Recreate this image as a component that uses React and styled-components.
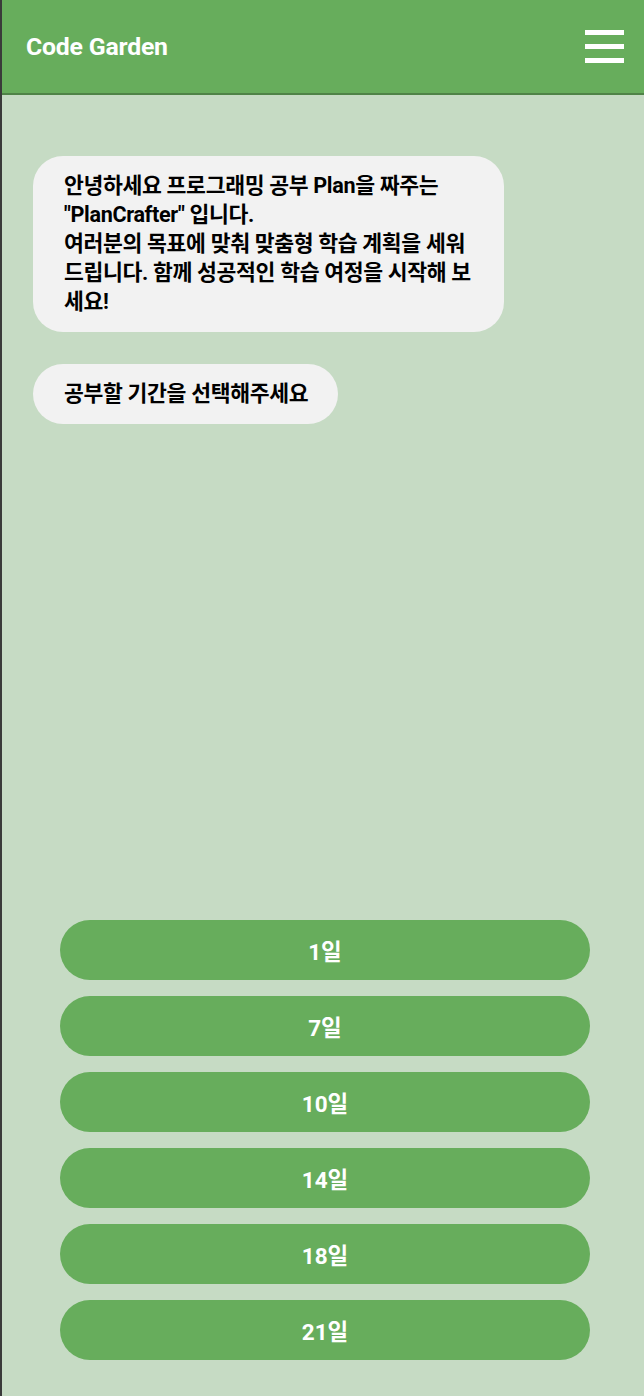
import React from "react";
import styled, { createGlobalStyle } from "styled-components";

const Global = createGlobalStyle`
  html, body { margin: 0; padding: 0; }
  body {
    font-family: Roboto, "Noto Sans CJK KR", sans-serif;
    background: #c6dbc4;
  }
  * { box-sizing: border-box; }
`;

const Page = styled.div`
  min-height: 100vh;
  display: flex;
  flex-direction: column;
  background: #c6dbc4;
  border-left: 2px solid #3a3a3a;
`;

const Header = styled.header`
  height: 95px;
  display: flex;
  align-items: center;
  justify-content: space-between;
  padding: 0 20px 0 24px;
  background: #67ad5c;
  border-bottom: 2px solid #4f8347;
`;

const Brand = styled.h1`
  margin: 0;
  font-size: 24.8px;
  font-weight: 700;
  color: #ffffff;
  letter-spacing: -0.2px;
`;

const MenuButton = styled.button`
  display: flex;
  flex-direction: column;
  gap: 9px;
  padding: 0;
  border: none;
  background: transparent;
  cursor: pointer;
  margin-top: -1px;
`;

const MenuBar = styled.span`
  display: block;
  width: 39px;
  height: 5px;
  background: #ffffff;
`;

const Chat = styled.main`
  flex: 1;
  display: flex;
  flex-direction: column;
  align-items: flex-start;
  gap: 32px;
  padding: 61px 31px 0;
`;

const Bubble = styled.div`
  max-width: 471px;
  padding: 15px 30px 16px 31px;
  background: #f2f2f2;
  border-radius: 30px;
  font-size: 21.6px;
  line-height: 29px;
  font-weight: 700;
  color: #000;
  letter-spacing: -0.35px;
`;

const Options = styled.div`
  display: flex;
  flex-direction: column;
  gap: 16px;
  padding: 0 54px 36px 58px;
`;

const Option = styled.button`
  height: 60px;
  width: 100%;
  border: none;
  border-radius: 30px;
  background: #67ad5c;
  color: #ffffff;
  font-family: inherit;
  font-size: 22.5px;
  font-weight: 700;
  cursor: pointer;
`;

const days = [1, 7, 10, 14, 18, 21];

export default function App() {
  return (
    <>
      <Global />
      <Page>
        <Header>
          <Brand>Code Garden</Brand>
          <MenuButton aria-label="menu">
            <MenuBar />
            <MenuBar />
            <MenuBar />
          </MenuButton>
        </Header>
        <Chat>
          <Bubble>
            안녕하세요 프로그래밍 공부 Plan을 짜주는 "PlanCrafter" 입니다.
            <br />
            여러분의 목표에 맞춰 맞춤형 학습 계획을 세워 드립니다. 함께 성공적인 학습 여정을 시작해 보세요!
          </Bubble>
          <Bubble>공부할 기간을 선택해주세요</Bubble>
        </Chat>
        <Options>
          {days.map((d) => (
            <Option key={d}>{d}일</Option>
          ))}
        </Options>
      </Page>
    </>
  );
}
